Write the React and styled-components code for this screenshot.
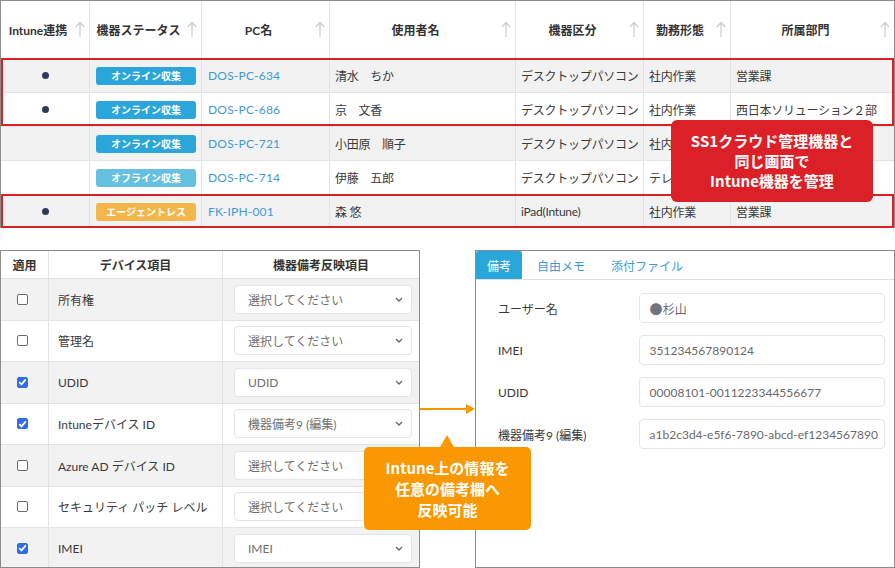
import React from 'react';
import styled, { createGlobalStyle } from 'styled-components';

const GlobalStyle = createGlobalStyle`
  html, body { margin: 0; padding: 0; background: #fff; }
  body {
    font-family: "Lato", "Noto Sans CJK JP", sans-serif;
    color: #333;
  }
  * { box-sizing: border-box; }
`;

const COLS = '89px 112px 128px 186px 128px 87px 1fr';

const headers = [
  { label: 'Intune連携' },
  { label: '機器ステータス' },
  { label: 'PC名' },
  { label: '使用者名' },
  { label: '機器区分' },
  { label: '勤務形態' },
  { label: '所属部門' },
];

const devices = [
  { intune: true, status: 'online', pc: 'DOS-PC-634', user: '清水　ちか', kind: 'デスクトップパソコン', work: '社内作業', dept: '営業課' },
  { intune: true, status: 'online', pc: 'DOS-PC-686', user: '京　文香', kind: 'デスクトップパソコン', work: '社内作業', dept: '西日本ソリューション２部' },
  { intune: false, status: 'online', pc: 'DOS-PC-721', user: '小田原　順子', kind: 'デスクトップパソコン', work: '社内作業', dept: '営業課' },
  { intune: false, status: 'offline', pc: 'DOS-PC-714', user: '伊藤　五郎', kind: 'デスクトップパソコン', work: 'テレワーク', dept: '営業課' },
  { intune: true, status: 'agentless', pc: 'FK-IPH-001', user: '森 悠', kind: 'iPad(Intune)', work: '社内作業', dept: '営業課' },
];

const statusText = {
  online: 'オンライン収集',
  offline: 'オフライン収集',
  agentless: 'エージェントレス',
};

const mappings = [
  { on: false, item: '所有権', value: '選択してください' },
  { on: false, item: '管理名', value: '選択してください' },
  { on: true, item: 'UDID', value: 'UDID' },
  { on: true, item: 'Intuneデバイス ID', value: '機器備考9 (編集)' },
  { on: false, item: 'Azure AD デバイス ID', value: '選択してください' },
  { on: false, item: 'セキュリティ パッチ レベル', value: '選択してください' },
  { on: true, item: 'IMEI', value: 'IMEI' },
];

const remarks = [
  { label: 'ユーザー名', mark: true, value: '杉山' },
  { label: 'IMEI', value: '351234567890124' },
  { label: 'UDID', value: '00008101-0011223344556677' },
  { label: '機器備考9 (編集)', value: 'a1b2c3d4-e5f6-7890-abcd-ef1234567890' },
];

function SortIcon() {
  return (
    <svg width="10" height="17" viewBox="0 0 10 17">
      <path d="M5 16 V2 M1 6 L5 1.5 L9 6" fill="none" stroke="#c9ccd1" strokeWidth="1.2" />
    </svg>
  );
}

function Chevron() {
  return (
    <svg width="8" height="5" viewBox="0 0 8 5">
      <path d="M1 1 L4 4 L7 1" fill="none" stroke="#666" strokeWidth="1.3" />
    </svg>
  );
}

function App() {
  return (
    <Page>
      <GlobalStyle />
      <DeviceTable>
        <HeadRow>
          {headers.map((h) => (
            <HeadCell key={h.label}>
              <span>{h.label}</span>
              <SortIcon />
            </HeadCell>
          ))}
        </HeadRow>
        <Group $flag>
          {devices.slice(0, 2).map((d, i) => <DeviceRow key={d.pc} d={d} shade={i % 2 === 0} />)}
        </Group>
        <Group>
          {devices.slice(2, 4).map((d, i) => <DeviceRow key={d.pc} d={d} shade={i % 2 === 0} />)}
        </Group>
        <Group $flag>
          <DeviceRow d={devices[4]} shade />
        </Group>
      </DeviceTable>

      <Bottom>
        <MapPanel>
          <MapHead>
            <MapHeadCell>適用</MapHeadCell>
            <MapHeadCell>デバイス項目</MapHeadCell>
            <MapHeadCell>機器備考反映項目</MapHeadCell>
          </MapHead>
          {mappings.map((m, i) => (
            <MapRow key={m.item} $shade={i % 2 === 0}>
              <MapCell $center>
                <Check $on={m.on}>
                  {m.on && (
                    <svg width="9" height="8" viewBox="0 0 9 8">
                      <path d="M1.2 4.2 L3.5 6.4 L7.8 1.4" fill="none" stroke="#fff" strokeWidth="1.7" />
                    </svg>
                  )}
                </Check>
              </MapCell>
              <MapCell>{m.item}</MapCell>
              <MapCell $select>
                <Select>
                  <span>{m.value}</span>
                  <Chevron />
                </Select>
              </MapCell>
            </MapRow>
          ))}
        </MapPanel>

        <ArrowZone>
          <ArrowLine />
          <ArrowHead />
        </ArrowZone>

        <RemarkPanel>
          <Tabs>
            <Tab $active>備考</Tab>
            <Tab>自由メモ</Tab>
            <Tab>添付ファイル</Tab>
          </Tabs>
          <Form>
            {remarks.map((r) => (
              <FormRow key={r.label}>
                <FormLabel>{r.label}</FormLabel>
                <Input>
                  {r.mark && <Mark>●</Mark>}
                  {r.value}
                </Input>
              </FormRow>
            ))}
          </Form>
        </RemarkPanel>
      </Bottom>

      <RedNote>
        SS1クラウド管理機器と<br />同じ画面で<br />Intune機器を管理
      </RedNote>
      <OrangeNote>
        Intune上の情報を<br />任意の備考欄へ<br />反映可能
      </OrangeNote>
    </Page>
  );
}

function DeviceRow({ d, shade }) {
  return (
    <Row $shade={shade}>
      <Cell $center>{d.intune && <Dot />}</Cell>
      <Cell><Badge $status={d.status}>{statusText[d.status]}</Badge></Cell>
      <Cell><PcLink>{d.pc}</PcLink></Cell>
      <Cell>{d.user}</Cell>
      <Cell>{d.kind}</Cell>
      <Cell>{d.work}</Cell>
      <Cell>{d.dept}</Cell>
    </Row>
  );
}

export default App;

const Page = styled.div`
  position: relative;
  width: 895px;
  height: 568px;
  overflow: hidden;
  background: #fff;
`;

const DeviceTable = styled.div`
  border: 1px solid #8c8c8c;
  border-bottom: none;
  height: 228px;
`;

const HeadRow = styled.div`
  display: grid;
  grid-template-columns: ${COLS};
  height: 57px;
`;

const HeadCell = styled.div`
  display: flex;
  align-items: center;
  padding-right: 4px;
  border-right: 1px solid #e4e5e8;
  font-size: 12px;
  font-weight: 700;
  color: #333;

  &:last-child { border-right: none; }

  span {
    flex: 1;
    text-align: center;
  }
`;

const Group = styled.div`
  position: relative;

  &::after {
    content: '';
    display: ${(p) => (p.$flag ? 'block' : 'none')};
    position: absolute;
    inset: 0;
    border: 2px solid #da2128;
    pointer-events: none;
  }
`;

const Row = styled.div`
  display: grid;
  grid-template-columns: ${COLS};
  height: 34px;
  background: ${(p) => (p.$shade ? '#f2f2f2' : '#fff')};
  border-top: 1px solid #e2e3e6;
`;

const Cell = styled.div`
  display: flex;
  align-items: center;
  justify-content: ${(p) => (p.$center ? 'center' : 'flex-start')};
  padding: 0 5px;
  border-right: 1px solid #e2e3e6;
  font-size: 12px;
  letter-spacing: -0.25px;
  color: #3a3a3a;
  white-space: nowrap;
  overflow: hidden;

  &:last-child { border-right: none; }
`;

const Dot = styled.span`
  width: 7px;
  height: 7px;
  border-radius: 50%;
  background: #2f3a55;
`;

const badgeColors = {
  online: '#2aa6db',
  offline: '#66c1e1',
  agentless: '#f3b64b',
};

const Badge = styled.span`
  width: 101px;
  height: 18px;
  margin-left: 1px;
  border-radius: 3px;
  display: flex;
  align-items: center;
  justify-content: center;
  background: ${(p) => badgeColors[p.$status]};
  color: #fff;
  font-family: "Noto Sans CJK JP", sans-serif;
  font-size: 10px;
  font-weight: 700;
  letter-spacing: 0;
`;

const PcLink = styled.span`
  color: #3f9ad6;
  font-size: 12px;
  letter-spacing: 0.2px;
  margin-left: 1px;
`;

const Bottom = styled.div`
  display: flex;
  margin-top: 22px;
  height: 318px;
`;

const MapPanel = styled.div`
  width: 420px;
  height: 318px;
  border: 1px solid #8c8c8c;
  overflow: hidden;
`;

const MapHead = styled.div`
  display: grid;
  grid-template-columns: 48px 174px 1fr;
  height: 28px;
  border-bottom: 1px solid #dfe1e5;
`;

const MapHeadCell = styled.div`
  display: flex;
  align-items: center;
  justify-content: center;
  font-size: 12px;
  font-weight: 700;
  border-right: 1px solid #e2e3e6;

  &:last-child { border-right: none; }
`;

const MapRow = styled.div`
  display: grid;
  grid-template-columns: 48px 174px 1fr;
  height: 41.5px;
  background: ${(p) => (p.$shade ? '#f2f2f2' : '#fff')};
  border-bottom: 1px solid #e2e3e6;
`;

const MapCell = styled.div`
  display: flex;
  align-items: center;
  justify-content: ${(p) => (p.$center ? 'center' : 'flex-start')};
  padding: ${(p) => (p.$center ? '0 4px 0 0' : p.$select ? '0 8px 0 11px' : '0 9px')};
  border-right: 1px solid #e2e3e6;
  font-size: 12px;
  color: #3a3a3a;
  white-space: nowrap;

  &:last-child { border-right: none; }
`;

const Check = styled.span`
  width: 11px;
  height: 11px;
  border-radius: 2px;
  display: flex;
  align-items: center;
  justify-content: center;
  background: ${(p) => (p.$on ? '#2f6fe2' : '#fff')};
  border: 1px solid ${(p) => (p.$on ? '#2f6fe2' : '#6b6b6b')};
`;

const Select = styled.div`
  width: 178px;
  height: 29px;
  display: flex;
  align-items: center;
  justify-content: space-between;
  padding: 0 8px 0 13px;
  background: #fff;
  border: 1px solid #e3e5e8;
  border-radius: 4px;
  color: #707070;
  font-size: 12px;
`;

const ArrowZone = styled.div`
  width: 55px;
  display: flex;
  align-items: center;
`;

const ArrowLine = styled.div`
  flex: 1;
  height: 2px;
  background: #f39800;
`;

const ArrowHead = styled.div`
  width: 0;
  height: 0;
  border-left: 9px solid #f39800;
  border-top: 5px solid transparent;
  border-bottom: 5px solid transparent;
`;

const RemarkPanel = styled.div`
  width: 420px;
  height: 318px;
  border: 1px solid #8c8c8c;
`;

const Tabs = styled.div`
  display: flex;
  height: 29px;
  border-bottom: 1px solid #dde1e6;
`;

const Tab = styled.div`
  display: flex;
  align-items: center;
  padding: 0 ${(p) => (p.$active ? '11px' : '13px')};
  margin-right: ${(p) => (p.$active ? '2px' : '0')};
  background: ${(p) => (p.$active ? '#2aa7da' : 'transparent')};
  color: ${(p) => (p.$active ? '#fff' : '#3f9ad6')};
  font-size: 12px;
  border-radius: 2px 2px 0 0;
`;

const Form = styled.div`
  padding: 13px 9px 0 22px;
  display: flex;
  flex-direction: column;
  gap: 12px;
`;

const FormRow = styled.div`
  display: flex;
  align-items: center;
  height: 30px;
`;

const FormLabel = styled.div`
  width: 141px;
  font-size: 12px;
  color: #3a3a3a;
  white-space: nowrap;
`;

const Input = styled.div`
  width: 247px;
  height: 30px;
  display: flex;
  align-items: center;
  padding: 0 10px;
  border: 1px solid #e3e5e8;
  border-radius: 4px;
  font-size: 12px;
  color: #6a6a6a;
  white-space: nowrap;
  overflow: hidden;
`;

const Mark = styled.span`
  font-family: "Noto Sans CJK JP", sans-serif;
  font-size: 13px;
  color: #6f7480;
`;

const Note = styled.div`
  position: absolute;
  display: flex;
  align-items: center;
  justify-content: center;
  text-align: center;
  color: #fff;
  font-family: "Noto Sans CJK JP", sans-serif;
  font-weight: 700;
  font-size: 15px;
`;

const RedNote = styled(Note)`
  left: 671px;
  top: 120px;
  width: 202px;
  height: 82px;
  background: #db2127;
  border-radius: 6px;
  line-height: 20px;
`;

const OrangeNote = styled(Note)`
  left: 364px;
  top: 447px;
  width: 167px;
  height: 83px;
  background: #f99800;
  border-radius: 5px;
  line-height: 21px;

  &::before {
    content: '';
    position: absolute;
    left: 76px;
    top: -12px;
    border-left: 7px solid transparent;
    border-right: 7px solid transparent;
    border-bottom: 12px solid #f99800;
  }
`;
